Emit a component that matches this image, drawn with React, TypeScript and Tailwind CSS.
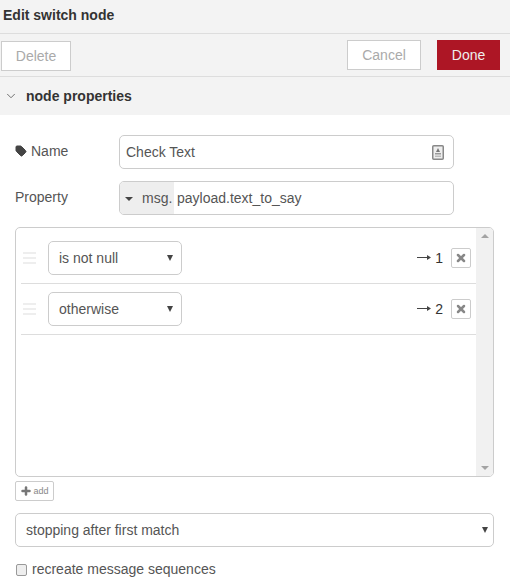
import { ChevronDown, Plus, Tag, X } from "lucide-react";

const RULES = [
  { label: "is not null", output: "1" },
  { label: "otherwise", output: "2" },
];

function SelectBox({ label, className }: { label: string; className: string }) {
  return (
    <div className={`flex items-center justify-between rounded-[5px] border border-[#cccccc] bg-white h-[34px] ${className}`}>
      <span className="pt-[1px]">{label}</span>
      <span className="w-0 h-0 border-x-[3.5px] border-x-transparent border-t-[6px] border-t-[#444444]" />
    </div>
  );
}

function RuleRow({ label, output }: { label: string; output: string }) {
  return (
    <div className="flex items-center h-[51px] ml-[5px] border-b border-[#dddddd] pb-[1px]">
      <div className="w-[13px] ml-[2px] flex flex-col gap-[3px]">
        <div className="h-[2px] bg-[#eeeeee]" />
        <div className="h-[2px] bg-[#eeeeee]" />
        <div className="h-[2px] bg-[#eeeeee]" />
      </div>
      <SelectBox label={label} className="w-[134px] ml-[12px] pl-[10px] pr-[8px]" />
      <div className="flex-1 flex justify-end items-center pr-[5px]">
        <svg width="14" height="7" viewBox="0 0 14 7" className="mr-[4px]">
          <path d="M0 3.5 H13" stroke="#444444" strokeWidth="1" />
          <path d="M10 1 L14 3.5 L10 6 Z" fill="#444444" />
        </svg>
        <span className="text-[14px] text-[#333333] mr-[8px] leading-none">{output}</span>
        <button className="w-[20px] h-[20px] flex items-center justify-center border border-[#cccccc] rounded-[2px] bg-white">
          <X size={12} strokeWidth={5} className="text-[#888888]" />
        </button>
      </div>
    </div>
  );
}

export default function App() {
  return (
    <div className="w-[510px] h-[583px] overflow-hidden bg-white font-['Liberation_Sans',Arial,sans-serif] text-[14px] text-[#555555]">
      <div className="h-[34px] bg-[#f3f3f3] border-b border-[#dddddd] pl-[3px] pt-[7px] text-[#333333] font-bold leading-[16px]">
        Edit switch node
      </div>
      <div className="h-[43px] bg-[#f3f3f3] border-b border-[#dddddd] flex items-start pt-[6px] pl-[1px] pr-[10px]">
        <button className="w-[70px] h-[30px] mt-[1px] bg-white border border-[#cccccc] text-[#aaaaaa]">Delete</button>
        <button className="ml-auto w-[74px] h-[30px] bg-white border border-[#cccccc] text-[#aaaaaa]">Cancel</button>
        <button className="ml-[16px] w-[63px] h-[30px] bg-[#ad1625] text-[#eeeeee]">Done</button>
      </div>
      <div className="h-[38px] bg-[#f3f3f3] flex items-center pl-[4px] font-bold text-[#333333]">
        <ChevronDown size={14} strokeWidth={1.6} className="text-[#666666]" />
        <span className="ml-[8px]">node properties</span>
      </div>

      <div className="px-[15px] pt-[20px]">
        <div className="flex items-center h-[34px]">
          <div className="w-[104px] flex items-center pb-[2px]">
            <Tag size={12} strokeWidth={2} fill="#444444" className="text-[#444444] mr-[4px]" />
            <span>Name</span>
          </div>
          <div className="w-[335px] h-[34px] rounded-[5px] border border-[#cccccc] flex items-center justify-between pl-[6px] pr-[8px]">
            <span>Check Text</span>
            <svg width="12" height="15" viewBox="0 0 12 15" className="mr-[1px]">
              <rect x="0.75" y="0.75" width="10.5" height="13.5" rx="1" fill="#eeeeee" stroke="#888888" strokeWidth="1.5" />
              <path d="M6 3 L8 7 H4 Z" fill="#777777" />
              <rect x="3" y="8" width="6" height="1.5" fill="#999999" />
              <rect x="3" y="10.5" width="6" height="1.5" fill="#bbbbbb" />
            </svg>
          </div>
        </div>

        <div className="flex items-center h-[34px] mt-[12px]">
          <div className="w-[104px] pb-[1px]">Property</div>
          <div className="w-[335px] h-[34px] rounded-[5px] border border-[#cccccc] flex items-center overflow-hidden">
            <div className="w-[54px] h-full bg-[#eeeeee] flex items-center pl-[5px]">
              <span className="w-0 h-0 border-x-[4px] border-x-transparent border-t-[4px] border-t-[#444444] mt-[2px]" />
              <span className="ml-[9px]">msg.</span>
            </div>
            <span className="ml-[3px]">payload.text_to_say</span>
          </div>
        </div>

        <div className="w-[479px] h-[250px] mt-[12px] rounded-[5px] border border-[#cccccc] flex overflow-hidden">
          <div className="flex-1 pt-[5px]">
            {RULES.map((r) => (
              <RuleRow key={r.label} label={r.label} output={r.output} />
            ))}
          </div>
          <div className="w-[17px] bg-[#f1f1f1] flex flex-col items-center justify-between py-[6px]">
            <span className="w-0 h-0 border-x-[4px] border-x-transparent border-b-[4px] border-b-[#a3a3a3]" />
            <span className="w-0 h-0 border-x-[4px] border-x-transparent border-t-[4px] border-t-[#a3a3a3]" />
          </div>
        </div>

        <button className="mt-[4px] w-[39px] h-[20px] flex items-center justify-center border border-[#cccccc] rounded-[2px] text-[9px] text-[#888888]">
          <Plus size={12} strokeWidth={5} className="text-[#777777] mr-[1px]" />
          <span className="pt-[1px]">add</span>
        </button>

        <SelectBox label="stopping after first match" className="w-[479px] mt-[12px] pl-[10px] pr-[5px]" />

        <div className="flex items-center mt-[13px] leading-[18px]">
          <span className="w-[11px] h-[12px] ml-[1px] mt-[1px] rounded-[2px] border border-[#999999] bg-[#eeeeee]" />
          <span className="ml-[5px]">recreate message sequences</span>
        </div>
      </div>
    </div>
  );
}
